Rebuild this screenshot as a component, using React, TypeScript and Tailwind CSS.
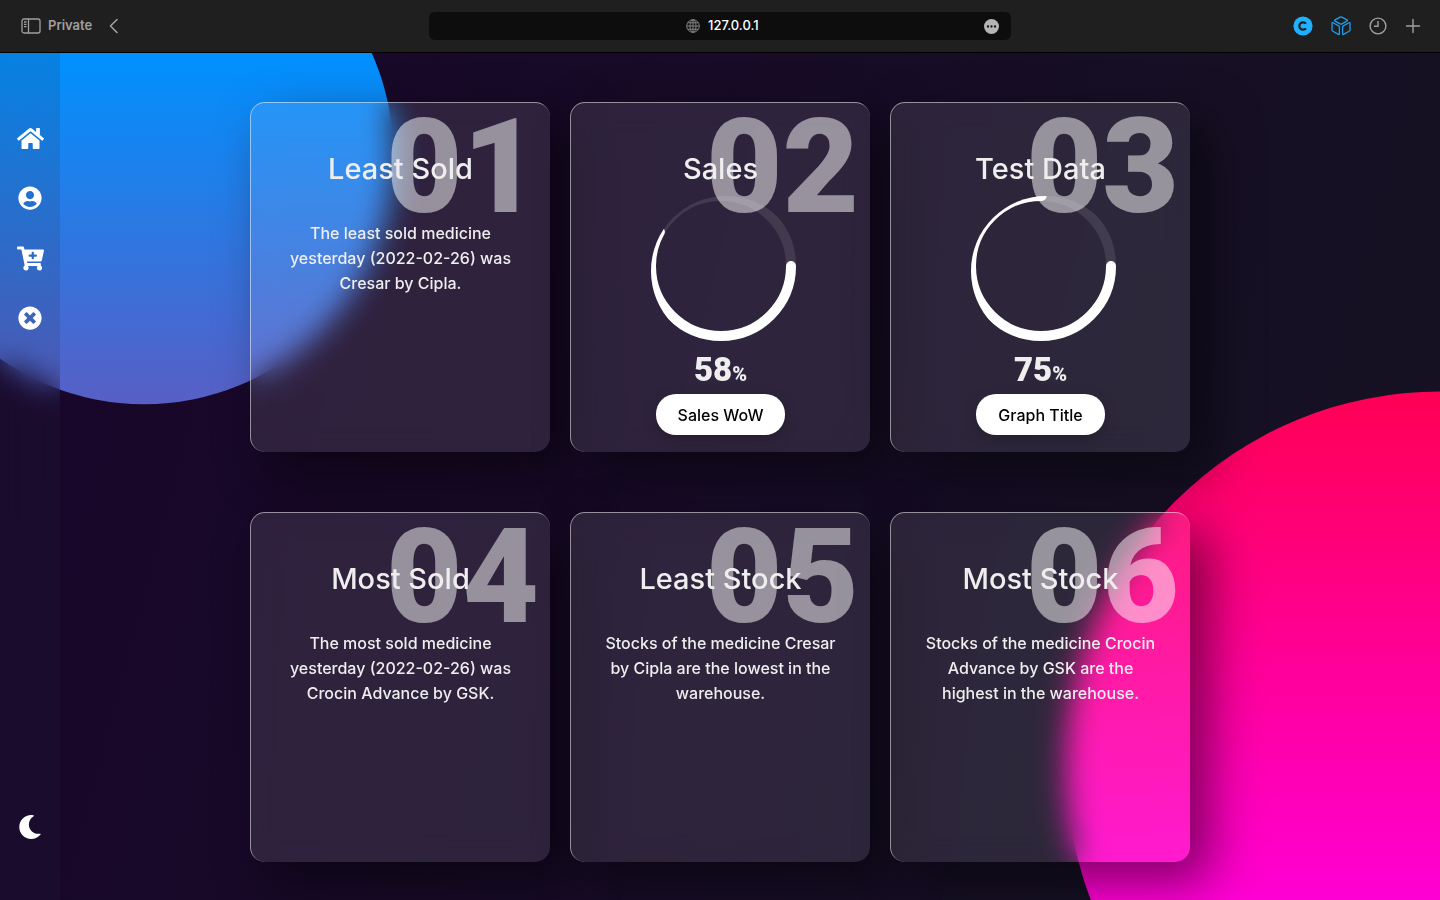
import type { ReactNode } from "react";
import {
  FaHome,
  FaUserCircle,
  FaCartPlus,
  FaTimesCircle,
  FaMoon,
} from "react-icons/fa";

type Card = {
  id: string;
  title: string;
  text?: string;
  percent?: number;
  action?: string;
};

const cards: Card[] = [
  { id: "01", title: "Least Sold", text: "The least sold medicine yesterday (2022-02-26) was Cresar by Cipla." },
  { id: "02", title: "Sales", percent: 58, action: "Sales WoW" },
  { id: "03", title: "Test Data", percent: 75, action: "Graph Title" },
  { id: "04", title: "Most Sold", text: "The most sold medicine yesterday (2022-02-26) was Crocin Advance by GSK." },
  { id: "05", title: "Least Stock", text: "Stocks of the medicine Cresar by Cipla are the lowest in the warehouse." },
  { id: "06", title: "Most Stock", text: "Stocks of the medicine Crocin Advance by GSK are the highest in the warehouse." },
];

const links: { label: string; icon: ReactNode }[] = [
  { label: "Home", icon: <FaHome className="size-[27px]" /> },
  { label: "Account", icon: <FaUserCircle className="size-6" /> },
  { label: "Add to cart", icon: <FaCartPlus className="size-[27px]" /> },
  { label: "Close", icon: <FaTimesCircle className="size-6" /> },
];

function Toolbar() {
  return (
    <header className="flex h-[53px] shrink-0 items-center border-b border-black bg-[#1f1f1f] px-[19px] text-[13px] text-[#a0a0a0]">
      <div className="flex flex-1 items-center">
        <button aria-label="Sidebar" className="mr-[7px] ml-[2px]">
          <svg width="20" height="16" viewBox="0 0 20 16" fill="none" stroke="currentColor" strokeWidth="1.3">
            <rect x="1" y="1" width="18" height="14" rx="2" />
            <path d="M7.5 1v14M3 4h2.5M3 6.3h2.5M3 8.6h2.5" />
          </svg>
        </button>
        <span className="font-semibold">Private</span>
        <button aria-label="Back" className="ml-4">
          <svg width="12" height="16" viewBox="0 0 12 16" fill="none" stroke="currentColor" strokeWidth="1.6" strokeLinecap="round" strokeLinejoin="round">
            <path d="M9 1.5 2.5 8 9 14.5" />
          </svg>
        </button>
      </div>

      <div className="relative flex h-7 w-[582px] items-center justify-center gap-2 rounded-md bg-[#0d0d0d] pl-2">
        <svg width="14" height="14" viewBox="0 0 14 14" fill="none" stroke="#8e8e8e" strokeWidth="0.9">
          <circle cx="7" cy="7" r="6.3" />
          <ellipse cx="7" cy="7" rx="3" ry="6.3" />
          <path d="M7 .7v12.6M.7 7h12.6M1.6 3.8h10.8M1.6 10.2h10.8" />
        </svg>
        <input aria-label="Address" defaultValue="127.0.0.1" className="w-[54px] bg-transparent font-medium text-white outline-none" />
        <button aria-label="Page menu" className="absolute right-3">
          <svg width="15" height="15" viewBox="0 0 15 15">
            <circle cx="7.5" cy="7.5" r="7.5" fill="#b4b4b4" />
            <g fill="#111">
              <circle cx="4" cy="7.5" r="1.15" />
              <circle cx="7.5" cy="7.5" r="1.15" />
              <circle cx="11" cy="7.5" r="1.15" />
            </g>
          </svg>
        </button>
      </div>

      <div className="flex flex-1 items-center justify-end gap-[18px]">
        <button aria-label="Extension C">
          <svg width="20" height="20" viewBox="0 0 20 20" fill="none">
            <circle cx="10" cy="10" r="9.6" fill="#1fb0ff" />
            <path d="M12.9 7.6A3.7 3.7 0 1 0 12.9 12.4" stroke="#1f1f1f" strokeWidth="2.2" />
          </svg>
        </button>
        <button aria-label="Extension cube">
          <svg width="20" height="20" viewBox="0 0 20 20" fill="none" stroke="#1c9df0" strokeWidth="1.3" strokeLinejoin="round">
            <path d="M9.2 1.1q.8-.4 1.6 0l5.2 2.8q1 .6 0 1.200l-5.200 2.800q-.8.4-1.600 0L4 5.100q-1-.6 0-1.200z" />
            <path d="M1 7.400q0-1.200 1.100-.6l5.500 3.100q.8.5.8 1.400v6.500q0 1.200-1 .6l-5.500-3.100q-.9-.5-.9-1.500z" />
            <path d="M19 7.400q0-1.200-1.100-.6l-5.500 3.100q-.8.5-.8 1.400v6.500q0 1.200 1 .6l5.500-3.100q.9-.5.9-1.500z" />
          </svg>
        </button>
        <button aria-label="History">
          <svg width="18" height="18" viewBox="0 0 18 18" fill="none" stroke="currentColor" strokeWidth="1.4">
            <circle cx="9" cy="9" r="7.900" />
            <path d="M9 4v5.300H5" />
          </svg>
        </button>
        <button aria-label="New tab">
          <svg width="16" height="16" viewBox="0 0 16 16" fill="none" stroke="currentColor" strokeWidth="1.4" strokeLinecap="round">
            <path d="M8 1.500v13M1.500 8h13" />
          </svg>
        </button>
      </div>
    </header>
  );
}

function Ring({ percent }: { percent: number }) {
  return (
    <div className="mt-[7px] h-[150px] w-[140px]">
      <svg width="150" height="150" className="max-w-none overflow-hidden rounded-full" fill="none" strokeWidth="10" strokeLinecap="round">
        <circle cx="70" cy="70" r="70" stroke="#fff" strokeOpacity="0.1" />
        <circle cx="70" cy="70" r="70" stroke="#fff" strokeDasharray="440" strokeDashoffset={440 - (440 * percent) / 100} />
      </svg>
    </div>
  );
}

function InfoCard({ card }: { card: Card }) {
  return (
    <article className="relative flex h-[350px] flex-col items-center rounded-[15px] border-t border-l border-white/50 bg-white/10 px-[30px] pt-[46px] text-center text-[#eeeeee] shadow-[20px_20px_50px_rgba(0,0,0,0.5)] backdrop-blur-[15px]">
      <span className="absolute top-0 right-[11px] font-['Roboto','Inter',sans-serif] text-[132px] leading-[128px] font-black text-white/50">{card.id}</span>
      <h2 className="relative text-[29px] leading-10 font-medium">{card.title}</h2>
      {card.text && <p className="relative mt-8 text-base leading-[25px] font-medium">{card.text}</p>}
      {card.percent !== undefined && (
        <div className="relative flex flex-col items-center">
          <Ring percent={card.percent} />
          <p className="mt-1 mb-1 font-['Roboto','Inter',sans-serif] text-[33px] leading-10 font-black">
            {card.percent}
            <span className="text-xl">%</span>
          </p>
          <button className="h-[41px] w-[129px] rounded-[20px] bg-white text-base font-medium text-black shadow-[0_5px_15px_rgba(0,0,0,0.2)]">
            {card.action}
          </button>
        </div>
      )}
    </article>
  );
}

export default function App() {
  return (
    <div className="flex min-h-screen flex-col font-['Inter','Liberation_Sans',sans-serif]">
      <Toolbar />
      <div className="relative flex flex-1 overflow-hidden bg-linear-105/srgb from-[#19052b] to-[#151322]">
        <div className="absolute inset-x-0 top-0 h-[1018px] bg-linear-to-b/srgb from-[#ff0000] to-[#ff00ff] [clip-path:circle(30%_at_right_70%)]" />
        <div className="absolute inset-x-0 top-0 h-[1018px] bg-linear-to-b/srgb from-[#0091ff] to-[#ff0057] [clip-path:circle(20%_at_10%_10%)]" />

        <nav className="absolute inset-y-0 left-0 flex w-[60px] flex-col items-center bg-[#2a3040]/15 pt-[55px] pb-[43px] text-white backdrop-blur-[15px]">
          {links.map((link) => (
            <a key={link.label} href="#" aria-label={link.label} className="flex size-[60px] items-center justify-center">
              {link.icon}
            </a>
          ))}
          <button aria-label="Dark mode" className="mt-auto flex size-[60px] items-center justify-center">
            <FaMoon className="size-6" />
          </button>
        </nav>

        <main className="relative grid flex-1 grid-cols-[repeat(3,300px)] content-start justify-center gap-x-5 gap-y-[60px] pt-[49px] pb-[38px]">
          {cards.map((card) => (
            <InfoCard key={card.id} card={card} />
          ))}
        </main>
      </div>
    </div>
  );
}
